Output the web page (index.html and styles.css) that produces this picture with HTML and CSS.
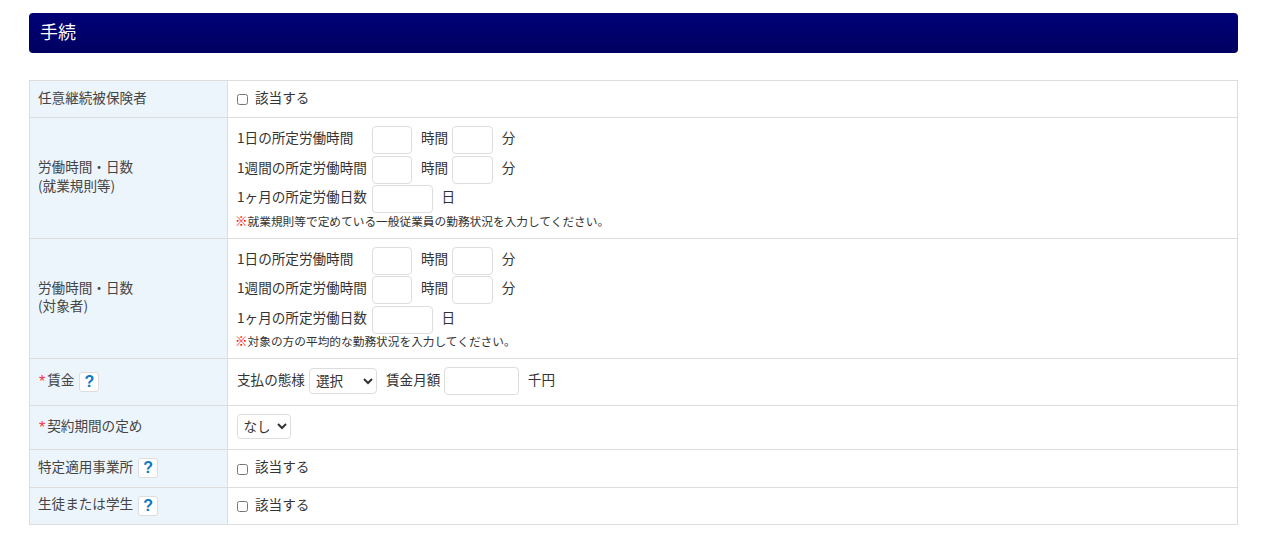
FILE: index.html
```html
<!DOCTYPE html>
<html lang="ja">
<head>
<meta charset="utf-8">
<title>手続</title>
<link rel="stylesheet" href="styles.css">
</head>
<body>
<h2 class="heading">手続</h2>
<table class="form">
<tr class="r37">
  <th>任意継続被保険者</th>
  <td><label class="check"><input type="checkbox"><span>該当する</span></label></td>
</tr>
<tr>
  <th>労働時間・日数<br>(就業規則等)</th>
  <td>
    <div class="line"><span class="cap">1日の所定労働時間</span><input class="in-h"><span class="unit">時間</span><input class="in-m"><span class="unit2">分</span></div>
    <div class="line"><span class="cap">1週間の所定労働時間</span><input class="in-h"><span class="unit">時間</span><input class="in-m"><span class="unit2">分</span></div>
    <div class="line"><span class="cap">1ヶ月の所定労働日数</span><input class="in-d"><span class="unit2">日</span></div>
    <div class="note"><span class="mark">※</span>就業規則等で定めている一般従業員の勤務状況を入力してください。</div>
  </td>
</tr>
<tr>
  <th>労働時間・日数<br>(対象者)</th>
  <td>
    <div class="line"><span class="cap">1日の所定労働時間</span><input class="in-h"><span class="unit">時間</span><input class="in-m"><span class="unit2">分</span></div>
    <div class="line"><span class="cap">1週間の所定労働時間</span><input class="in-h"><span class="unit">時間</span><input class="in-m"><span class="unit2">分</span></div>
    <div class="line"><span class="cap">1ヶ月の所定労働日数</span><input class="in-d"><span class="unit2">日</span></div>
    <div class="note"><span class="mark">※</span>対象の方の平均的な勤務状況を入力してください。</div>
  </td>
</tr>
<tr class="r47">
  <th class="has-help"><span class="req">*</span>賃金<span class="help">?</span></th>
  <td>
    <div class="wage"><span class="txt">支払の態様</span><select class="sel-pay"><option>選択</option></select><span class="txt gap-l">賃金月額</span><input class="in-w"><span class="unit2">千円</span></div>
  </td>
</tr>
<tr class="r44">
  <th><span class="req">*</span>契約期間の定め</th>
  <td><select class="sel-term"><option>なし</option></select></td>
</tr>
<tr class="r38">
  <th class="has-help">特定適用事業所<span class="help">?</span></th>
  <td><label class="check"><input type="checkbox"><span>該当する</span></label></td>
</tr>
<tr class="r37">
  <th class="has-help">生徒または学生<span class="help">?</span></th>
  <td><label class="check"><input type="checkbox"><span>該当する</span></label></td>
</tr>
</table>
</body>
</html>
```
FILE: styles.css
```css
* { box-sizing: border-box; }
html, body { margin: 0; padding: 0; background: #fff; }
body {
  padding: 13px 28px 0 29px;
  font-family: "Noto Sans CJK JP", "Noto Sans", sans-serif;
  font-size: 13.6px;
  color: #333;
}
.heading {
  margin: 0 0 27px;
  height: 40px;
  padding: 0 11px;
  font-size: 18px;
  font-weight: 400;
  line-height: 37px;
  color: #fff;
  background: linear-gradient(#000078, #000060);
  border-radius: 4px;
}
.form {
  width: 1209px;
  border-collapse: collapse;
  table-layout: fixed;
}
.form th, .form td {
  border: 1px solid #ddd;
  vertical-align: middle;
}
.form th {
  width: 198px;
  padding: 0 8px 4px 8px;
  background: #edf5fc;
  font-weight: 400;
  text-align: left;
  line-height: 18.5px;
  color: #444;
}
.form th.has-help { padding-bottom: 2px; }
.form td { padding: 8px 8px 8px 9px; line-height: 18px; }
.r37 { height: 37px; }
.r38 { height: 38px; }
.r44 { height: 44px; }
.r47 { height: 47px; }
.r37 td, .r38 td { padding-top: 0; padding-bottom: 0; }
.r44 td, .r47 td { padding-top: 0; padding-bottom: 2px; }
.check { display: flex; align-items: center; gap: 7px; }
.check span { padding-bottom: 5px; }
.check input { margin: 1px 0 0; width: 11px; height: 11px; }
.line { display: flex; align-items: center; height: 28px; margin-bottom: 1.5px; }
.line span { padding-bottom: 5.5px; }
.wage span { padding-bottom: 4px; }
.cap { width: 135px; flex: none; }
input:not([type]) {
  height: 28px;
  padding: 0 6px;
  border: 1px solid #ddd;
  border-radius: 4px;
  background: #fff;
  outline: none;
}
.in-h { width: 40px; }
.in-m { width: 41px; }
.in-d { width: 61px; }
.in-w { width: 75px; }
.unit { margin: 0 4px 0 9px; }
.unit2 { margin-left: 8.5px; }
.note { font-size: 11.7px; line-height: 15px; padding-bottom: 2px; margin-top: -2px; }
.mark { color: #f00; font-weight: 700; font-size: 12.5px; margin: 0 0 0 -2px; }
.wage { display: flex; align-items: center; }
select {
  height: 26px;
  border: 1px solid #ddd;
  border-radius: 4px;
  background-color: #fff;
  color: #333;
  font-family: inherit;
  font-size: 13.6px;
  padding: 0 2px 2px;
}
.sel-pay { width: 68px; margin: 0 0 1px 4px; }
.sel-term { width: 54px; height: 25px; margin-left: -0.5px; display: block; }
.gap-l { margin: 0 4px 0 9px; }
.req {
  color: #f33;
  font-family: "Liberation Sans", sans-serif;
  font-size: 16px;
  line-height: 1;
  padding-left: 1px;
  margin-right: 2px;
  vertical-align: -2px;
}
.help {
  display: inline-block;
  width: 20px;
  height: 20px;
  margin-left: 5px;
  border: 1px solid #ddd;
  border-radius: 3px;
  background: #fff;
  color: #0a78c8;
  font-family: "Liberation Sans", sans-serif;
  font-size: 16px;
  font-weight: 700;
  line-height: 18px;
  text-align: center;
  vertical-align: middle;
}
```
